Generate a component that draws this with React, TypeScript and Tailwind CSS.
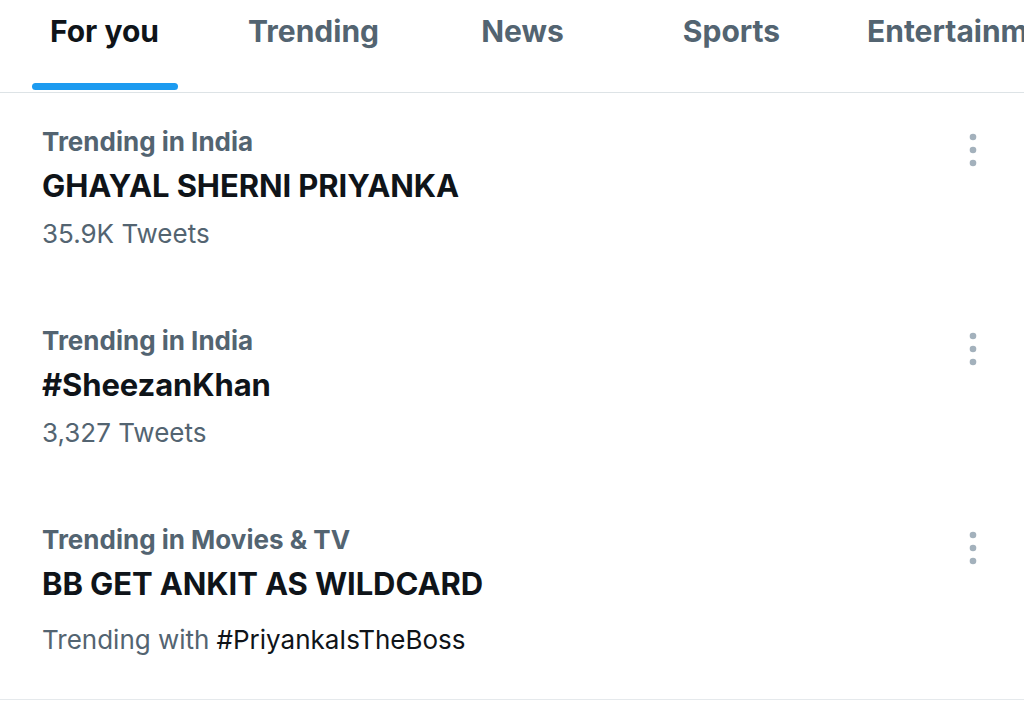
const TABS = ["For you", "Trending", "News", "Sports", "Entertainment"];

type Trend = { label: string; title: string; meta: string; withTag?: string };

const TRENDS: Trend[] = [
  { label: "Trending in India", title: "GHAYAL SHERNI PRIYANKA", meta: "35.9K Tweets" },
  { label: "Trending in India", title: "#SheezanKhan", meta: "3,327 Tweets" },
  { label: "Trending in Movies & TV", title: "BB GET ANKIT AS WILDCARD", meta: "Trending with", withTag: "#PriyankaIsTheBoss" },
];

function MoreDots() {
  return (
    <svg width="8" height="34" viewBox="0 0 8 34" className="mt-[14px] shrink-0">
      <circle cx="4" cy="4" r="3.3" fill="#a3b1bc" />
      <circle cx="4" cy="17" r="3.3" fill="#a3b1bc" />
      <circle cx="4" cy="30" r="3.3" fill="#a3b1bc" />
    </svg>
  );
}

export default function App() {
  return (
    <div className="w-[1024px] h-[713px] overflow-hidden bg-white font-['Inter',sans-serif]">
      {/* tabs */}
      <div className="flex h-[93px] border-b border-[#dde3e6] overflow-hidden">
        {TABS.map((t, i) => (
          <div key={t} className="min-w-[209px] px-[31px] shrink-0 flex flex-col items-center">
            <div
              className={
                "h-[62px] flex items-center text-[30px] font-bold whitespace-nowrap " +
                (i === 0 ? "text-[#0f1419]" : "text-[#536471]")
              }
            >
              {t}
            </div>
            {i === 0 && <div className="mt-[21px] w-[146px] h-[7px] rounded-full bg-[#1d9bf0]" />}
          </div>
        ))}
      </div>

      {/* trends */}
      <div className="border-b border-[#e5e9ec]">
        {TRENDS.map((tr, i) => (
          <div key={i} className={"flex justify-between pl-[42px] pr-[47px] pt-[26px] " + (tr.withTag ? "pb-[36px]" : "pb-[35px]")}>
            <div className="flex flex-col">
              <div className="h-[44px] flex items-center text-[26px] font-bold text-[#536471]">{tr.label}</div>
              <div className="h-[46px] flex items-center text-[31px] font-bold text-[#0f1419] tracking-[-0.1px]">{tr.title}</div>
              <div className={"h-[48px] flex items-center text-[26px] text-[#536471] " + (tr.withTag ? "mt-[8px]" : "")}>
                {tr.meta}
                {tr.withTag && <span className="ml-[7px] text-[#0f1419]">{tr.withTag}</span>}
              </div>
            </div>
            <MoreDots />
          </div>
        ))}
      </div>
    </div>
  );
}
